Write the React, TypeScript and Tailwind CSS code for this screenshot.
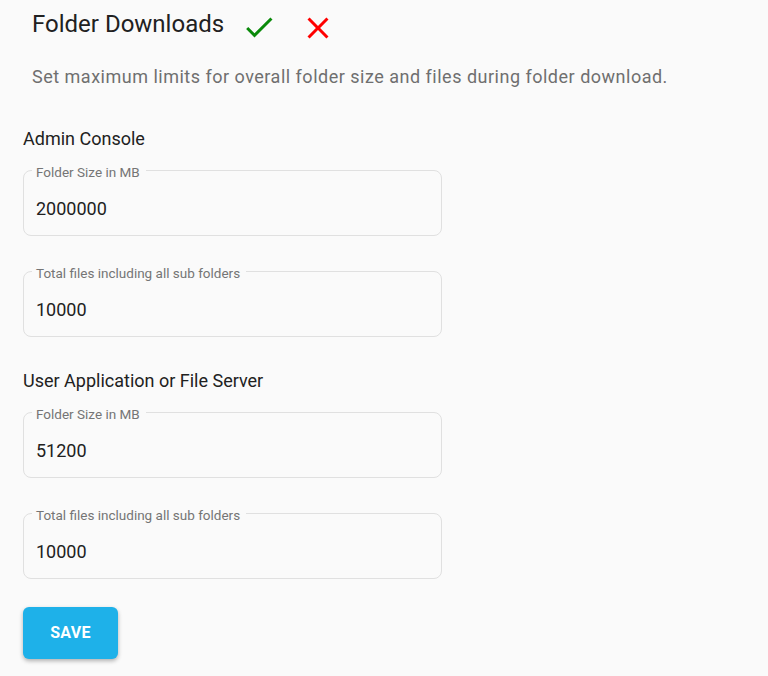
import React from "react";

function Field({ label, value }: { label: string; value: string }) {
  return (
    <div className="relative w-[419px] h-[66px] rounded-lg border border-[#e0e0e0]">
      <span className="absolute left-[8px] top-[-7px] pl-[4px] pr-[6px] bg-[#fafafa] text-[13.5px] leading-[16px] text-[#757575]">
        {label}
      </span>
      <div className="pl-[12px] pt-[27px] text-[18px] leading-[22px] text-[#212121]">{value}</div>
    </div>
  );
}

export default function App() {
  return (
    <div className="min-h-[676px] w-[768px] bg-[#fafafa] font-['Roboto',sans-serif]">
      <div className="flex items-start pl-[32px] pt-[9px]">
        <h1 className="text-[24px] leading-[30px] text-[#212121] font-normal">Folder Downloads</h1>
        <svg className="ml-[17px]" width="36" height="36" viewBox="0 0 24 24">
          <path d="M9 16.17 4.83 12l-1.42 1.41L9 19 21 7l-1.41-1.41z" fill="#0a8a0a" />
        </svg>
        <svg className="ml-[23px] mt-[1px]" width="36" height="36" viewBox="0 0 24 24">
          <path d="M19 6.41 17.59 5 12 10.59 6.41 5 5 6.41 10.59 12 5 17.59 6.41 19 12 13.41 17.59 19 19 17.59 13.41 12z" fill="#ff0000" />
        </svg>
      </div>
      <p className="pl-[32px] mt-[20px] text-[18px] leading-[22px] tracking-[0.5px] text-[#6f6f6f]">
        Set maximum limits for overall folder size and files during folder download.
      </p>
      <div className="pl-[23px]">
        <h2 className="mt-[40px] text-[18px] leading-[22px] text-[#212121]">Admin Console</h2>
        <div className="mt-[20px] flex flex-col gap-[35px]">
          <Field label="Folder Size in MB" value="2000000" />
          <Field label="Total files including all sub folders" value="10000" />
        </div>
        <h2 className="mt-[33px] text-[18px] leading-[22px] text-[#212121]">User Application or File Server</h2>
        <div className="mt-[20px] flex flex-col gap-[35px]">
          <Field label="Folder Size in MB" value="51200" />
          <Field label="Total files including all sub folders" value="10000" />
        </div>
        <button className="mt-[28px] w-[95px] h-[52px] rounded-[6px] bg-[#1eb1e9] text-white text-[16px] tracking-[0.3px] font-bold shadow-[0_2px_4px_rgba(0,0,0,0.3)]">
          SAVE
        </button>
      </div>
    </div>
  );
}
